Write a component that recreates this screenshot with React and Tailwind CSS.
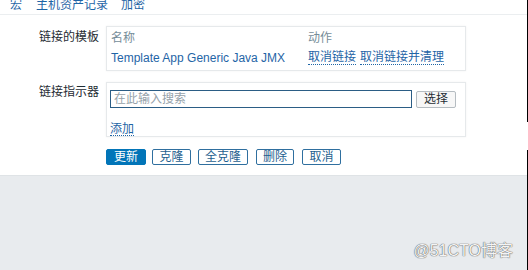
const font = { fontFamily: '"Liberation Sans", Arial, "Noto Sans CJK SC", sans-serif' };

const Btn = ({ children, primary, className = "" }) => (
    <button
        className={
            "h-[16px] px-[6px] text-[12px] leading-[14px] border rounded-[2px] " +
            (primary
                ? "bg-[#0275b8] border-[#0275b8] text-white "
                : "bg-white border-[#2f6f9f] text-[#1f5f8f] ") +
            className
        }
    >
        {children}
    </button>
);

const App = () => {
    return (
        <div className="flex w-[528px] h-[270px] overflow-hidden bg-white text-[12px]" style={font}>
            <div className="flex flex-col flex-1">
                <div className="bg-white">
                    {/* tabs, cut at the top */}
                    <div className="flex items-end h-[15px] pl-[10px] gap-[14px] pb-[2px] leading-[13px] text-[#1f65a6] border-b border-[#ebeef0] overflow-hidden">
                        <span>宏</span>
                        <span>主机资产记录</span>
                        <span className="-ml-[1px]">加密</span>
                    </div>

                    {/* linked templates */}
                    <div className="flex mt-[11px]">
                        <div className="w-[106px] pr-[7px] pt-[2px] text-right text-[#1f2c33]">链接的模板</div>
                        <div className="w-[360px] h-[45px] border border-[#e6e9eb] shadow-[0_0_2px_rgba(0,0,0,0.06)] px-[4px] pt-[4px]">
                            <div className="flex text-[#768d99] leading-[14px]">
                                <span className="w-[197px]">名称</span>
                                <span>动作</span>
                            </div>
                            <div className="flex mt-[6px] leading-[14px] text-[#1f65a6]">
                                <span className="w-[197px]">Template App Generic Java JMX</span>
                                <span className="border-b border-dotted border-[#1f65a6] leading-[12px]">取消链接</span>
                                <span className="ml-[4px] border-b border-dotted border-[#1f65a6] leading-[12px]">取消链接并清理</span>
                            </div>
                        </div>
                    </div>

                    {/* link indicators */}
                    <div className="flex mt-[11px]">
                        <div className="w-[106px] pr-[7px] pt-[1px] text-right text-[#1f2c33]">链接指示器</div>
                        <div className="w-[360px] h-[55px] border border-[#e6e9eb] shadow-[0_0_2px_rgba(0,0,0,0.06)] px-[3px] pt-[7px]">
                            <div className="flex items-center gap-[4px]">
                                <div className="w-[302px] h-[18px] border border-[#2b5d85] px-[3px] text-[#96a2aa] leading-[16px]">
                                    在此输入搜索
                                </div>
                                <button className="w-[40px] h-[17px] border border-[#b5bcc1] bg-[#f7f7f7] text-[#1f2c33] leading-[15px] rounded-[2px]">
                                    选择
                                </button>
                            </div>
                            <div className="mt-[12px] text-[#1f65a6]">
                                <span className="border-b border-dotted border-[#1f65a6] leading-[12px] inline-block">添加</span>
                            </div>
                        </div>
                    </div>

                    {/* action buttons */}
                    <div className="flex pl-[106px] mt-[12px] pb-[10px] gap-[6px]">
                        <Btn primary className="w-[40px]">更新</Btn>
                        <Btn className="w-[39px]">克隆</Btn>
                        <Btn className="w-[50px] ml-[1px]">全克隆</Btn>
                        <Btn className="w-[38px] ml-[2px]">删除</Btn>
                        <Btn className="w-[39px] ml-[2px]">取消</Btn>
                    </div>
                </div>

                <div className="flex-1 bg-[#e8ebee] border-t border-[#dfe3e6] flex items-end justify-end pr-[14px] pb-[10px]">
                    <span className="text-[16px] leading-[18px] text-[#f4f4f4] [text-shadow:0_0_1px_#555,0_0_1px_#555]">@51CTO博客</span>
                </div>
            </div>

            {/* edge of the capture */}
            <div className="flex flex-col w-[1px]">
                <div className="h-[122px] bg-black"></div>
                <div className="h-[28px] bg-white"></div>
                <div className="flex-1 bg-black"></div>
            </div>
        </div>
    );
};

export default App;
